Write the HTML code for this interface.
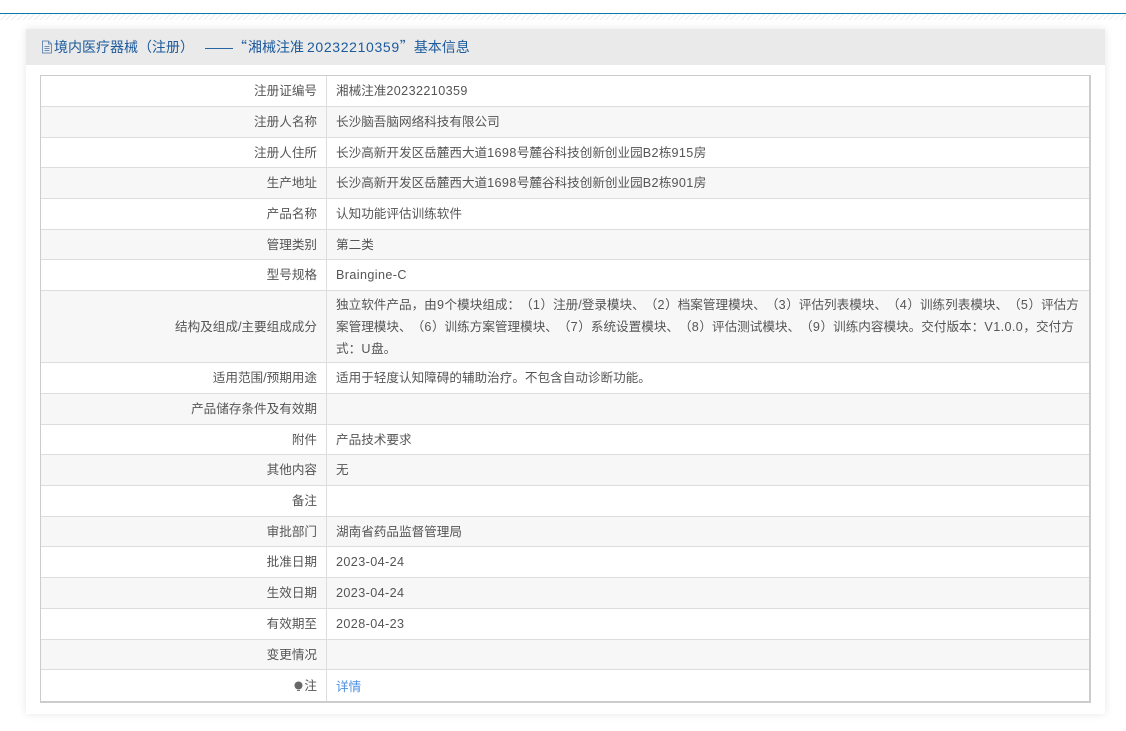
<!DOCTYPE html>
<html lang="zh"><head><meta charset="utf-8"><title>基本信息</title>
<style>
html,body{margin:0;padding:0;background:#fff}
body{width:1126px;height:731px;overflow:hidden;position:relative;font-family:"Liberation Sans","Noto Sans CJK SC",sans-serif;color:#555;text-spacing-trim:space-all;font-feature-settings:"chws" 0}
#line{position:absolute;left:0;top:13px;width:1126px;height:1px;background:#0a78ab}
#hatch{position:absolute;left:0;top:14px;width:1126px;height:6px;background:repeating-linear-gradient(135deg,#eee 0,#eee 1px,#fff 1px,#fff 4px)}
#panel{position:absolute;left:26px;top:29px;width:1079px;height:685px;background:#fff;box-shadow:0 0 8px rgba(0,0,0,.1)}
#head{position:absolute;left:0;top:0;width:1079px;height:36px;background:#eaeaea}
#title{position:absolute;left:28px;top:0;line-height:36px;font-size:14px;color:#1c5a9c;white-space:nowrap}
#title .n{letter-spacing:.65px;margin-left:3px}
.q{font-family:"Noto Sans CJK SC",sans-serif}
.q1{margin-right:1px}
.d{margin-left:11px}
#ico{position:absolute;left:15px;top:11px}
#tbl{position:absolute;left:14px;top:46px;width:1048px;height:625px;border:1px solid #ccc;border-right:2px solid #ccc;border-bottom:2px solid #ccc;box-sizing:content-box}
.r{position:absolute;left:0;width:1048px;border-bottom:1px solid #ddd;box-sizing:border-box}
.r.g{background:#f7f7f7}
.l,.v{position:absolute;top:0;bottom:0;display:flex;align-items:center;font-size:12.6px;line-height:20.7px;white-space:nowrap;box-sizing:border-box;padding-top:1px}
.l{left:0;width:286px;justify-content:flex-end;padding-right:9px;border-right:1px solid #ddd}
.v{left:286px;padding-left:9px;width:762px}
a{color:#4a90e2;text-decoration:none;position:relative;top:1px}
.n{letter-spacing:.4px}
.p{font-family:"Noto Sans CJK TC",sans-serif}
.p+.n{margin:0 .2px}
</style></head><body>
<div id="line"></div><div id="hatch"></div>
<div id="panel">
<div id="head">
<svg id="ico" width="12" height="14" viewBox="0 0 12 14"><path d="M1.5 1h6l3 3v9h-9zM7.5 1v3h3M3.5 6.5h5M3.5 8.5h5M3.5 10.5h5" fill="none" stroke="#6d8fb5" stroke-width="1"/></svg>
<div id="title">境内医疗器械<span class="p">（</span>注册<span class="p">）</span><span class="d">——</span><span class="q q1">“</span>湘械注准<span class="n">20232210359</span><span class="q">”</span>基本信息</div>
</div>
<div id="tbl">
<div class="r" style="top:0;height:31px"><div class="l">注册证编号</div><div class="v"><span>湘械注准<span class="n">20232210359</span></span></div></div>
<div class="r g" style="top:31px;height:31px"><div class="l">注册人名称</div><div class="v">长沙脑吾脑网络科技有限公司</div></div>
<div class="r" style="top:62px;height:30px"><div class="l">注册人住所</div><div class="v"><span>长沙高新开发区岳麓西大道<span class="n">1698</span>号麓谷科技创新创业园<span class="n">B2</span>栋<span class="n">915</span>房</span></div></div>
<div class="r g" style="top:92px;height:31px"><div class="l">生产地址</div><div class="v"><span>长沙高新开发区岳麓西大道<span class="n">1698</span>号麓谷科技创新创业园<span class="n">B2</span>栋<span class="n">901</span>房</span></div></div>
<div class="r" style="top:123px;height:31px"><div class="l">产品名称</div><div class="v">认知功能评估训练软件</div></div>
<div class="r g" style="top:154px;height:30px"><div class="l">管理类别</div><div class="v">第二类</div></div>
<div class="r" style="top:184px;height:31px"><div class="l">型号规格</div><div class="v"><span class="n">Braingine-C</span></div></div>
<div class="r g" style="top:215px;height:72px"><div class="l">结构及组成/主要组成成分</div><div class="v"><span>独立软件产品<span class="p">，</span>由<span class="n">9</span>个模块组成<span class="p">：（</span><span class="n">1</span><span class="p">）</span>注册/登录模块、<span class="p">（</span><span class="n">2</span><span class="p">）</span>档案管理模块、<span class="p">（</span><span class="n">3</span><span class="p">）</span>评估列表模块、<span class="p">（</span><span class="n">4</span><span class="p">）</span>训练列表模块、<span class="p">（</span><span class="n">5</span><span class="p">）</span>评估方<br>案管理模块、<span class="p">（</span><span class="n">6</span><span class="p">）</span>训练方案管理模块、<span class="p">（</span><span class="n">7</span><span class="p">）</span>系统设置模块、<span class="p">（</span><span class="n">8</span><span class="p">）</span>评估测试模块、<span class="p">（</span><span class="n">9</span><span class="p">）</span>训练内容模块。交付版本<span class="p">：</span><span class="n">V1.0.0</span><span class="p">，</span>交付方<br>式<span class="p">：</span><span class="n">U</span>盘。</span></div></div>
<div class="r" style="top:287px;height:31px"><div class="l">适用范围/预期用途</div><div class="v">适用于轻度认知障碍的辅助治疗。不包含自动诊断功能。</div></div>
<div class="r g" style="top:318px;height:31px"><div class="l">产品储存条件及有效期</div><div class="v"></div></div>
<div class="r" style="top:349px;height:30px"><div class="l">附件</div><div class="v">产品技术要求</div></div>
<div class="r g" style="top:379px;height:31px"><div class="l">其他内容</div><div class="v">无</div></div>
<div class="r" style="top:410px;height:31px"><div class="l">备注</div><div class="v"></div></div>
<div class="r g" style="top:441px;height:30px"><div class="l">审批部门</div><div class="v">湖南省药品监督管理局</div></div>
<div class="r" style="top:471px;height:31px"><div class="l">批准日期</div><div class="v"><span class="n">2023-04-24</span></div></div>
<div class="r g" style="top:502px;height:31px"><div class="l">生效日期</div><div class="v"><span class="n">2023-04-24</span></div></div>
<div class="r" style="top:533px;height:31px"><div class="l">有效期至</div><div class="v"><span class="n">2028-04-23</span></div></div>
<div class="r g" style="top:564px;height:30px"><div class="l">变更情况</div><div class="v"></div></div>
<div class="r" style="top:594px;height:31px;border-bottom:0"><div class="l"><svg width="9" height="11" viewBox="0 0 9 11" style="margin-right:1px"><circle cx="4.5" cy="4.5" r="4" fill="#666"/><path d="M3 9.5h3" stroke="#777"/></svg>注</div><div class="v"><a>详情</a></div></div>
</div>
</div>
</body></html>
